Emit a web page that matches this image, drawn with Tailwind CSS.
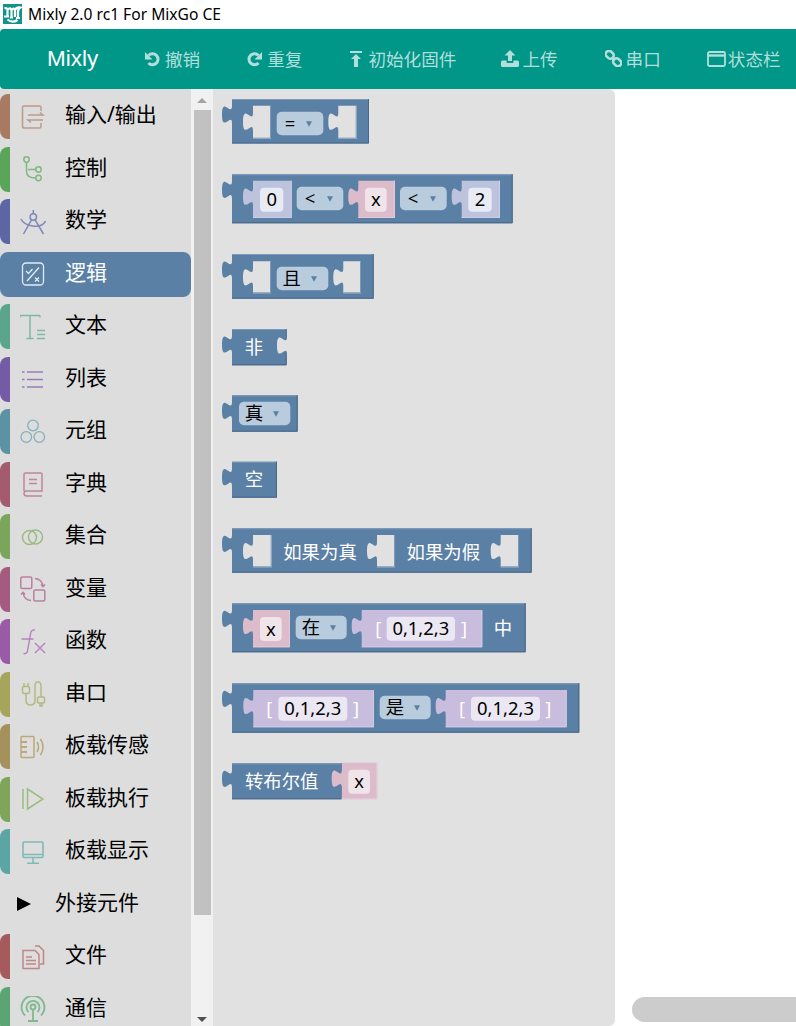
<!DOCTYPE html>
<html lang="en">
<head>
  <meta charset="UTF-8" />
  <title>Mixly 2.0 rc1 For MixGo CE</title>
  <script src="https://cdn.jsdelivr.net/npm/@tailwindcss/browser@4"></script>
</head>
<body class="h-[1026px] overflow-hidden bg-white text-black [font-family:'Noto_Sans','Noto_Sans_CJK_SC',sans-serif]">
  <!-- Window title -->
  <div class="h-[29px] flex items-center pl-[3px]">
    <svg class="w-[19px] h-[20px] mb-[1px]" viewBox="0 0 19 20">
      <rect width="19" height="20" fill="#12938a"/>
      <path d="M1.500 4.500c2-1 3 0 3 2v6.500M4.500 6c2-2.500 4-2 4 1v6M8.500 6c1.500-2 3.500-2 3.500 0.500V13M12 6c1-2 3-3 5.500-2.500-2.500 1-2.500 2.500-2.500 4.500v5.500M1 12.500h5M7 13.500h3M13 14h4M4.500 15.500c3 2.500 7 2.500 10 .5" fill="none" stroke="#fff" stroke-width="2.200"/>
    </svg>
    <span class="ml-[6px] text-[15.6px] leading-none">Mixly 2.0 rc1 For MixGo CE</span>
  </div>

  <!-- Nav bar -->
  <nav class="h-[60px] bg-[#009688] rounded-l-[4px] flex items-center pl-[47px] text-[17.6px] text-[#b2dfdb] whitespace-nowrap">
    <span class="text-[22.5px] text-white [font-family:'Liberation_Sans',sans-serif] w-[51px]">Mixly</span>
    <span class="ml-[47px] flex items-center gap-[5px]">
      <svg class="w-[15px] h-[16px]" viewBox="0 0 15 16" fill="none" stroke="#b2dfdb" stroke-width="3"><path d="M3.500 4.500a5.500 5.500 0 1 1 0 7.500"/><path d="M0 1v7.500h7.500z" fill="#b2dfdb" stroke="none"/></svg>
      <span>撤销</span>
    </span>
    <span class="ml-[47px] flex items-center gap-[5px]">
      <svg class="w-[15px] h-[16px]" viewBox="0 0 15 16" fill="none" stroke="#b2dfdb" stroke-width="3"><path d="M11.500 4.500a5.500 5.500 0 1 0 0 7.500"/><path d="M15 1v7.500H7.500z" fill="#b2dfdb" stroke="none"/></svg>
      <span>重复</span>
    </span>
    <span class="ml-[48px] flex items-center gap-[6px]">
      <svg class="w-[12px] h-[18px]" viewBox="0 0 12 18" fill="#b2dfdb"><path d="M0 1h12v2H0zM6 4l5 5H8v8H4V9H1z"/></svg>
      <span>初始化固件</span>
    </span>
    <span class="ml-[45px] flex items-center gap-[3px]">
      <svg class="w-[18px] h-[17px]" viewBox="0 0 18 17" fill="#b2dfdb"><path d="M9 0l5.500 5.500H11V11H7V5.500H3.500zM1.500 10.500h4v1.500q0 1 1 1h5q1 0 1-1v-1.500h4q1.500 0 1.500 1.500v3.500q0 1.500-1.500 1.500h-15Q0 17 0 15.500V12q0-1.500 1.500-1.500z"/></svg>
      <span>上传</span>
    </span>
    <span class="ml-[47px] flex items-center gap-[4px]">
      <svg class="w-[17px] h-[17px]" viewBox="0 0 17 17" fill="none" stroke="#b2dfdb" stroke-width="2.600"><rect x="0.500" y="1.500" width="8.500" height="6.500" rx="3.200" transform="rotate(40 4.700 4.700)"/><rect x="8" y="9" width="8.500" height="6.500" rx="3.200" transform="rotate(40 12.200 12.200)"/><path d="M7 7l3 3"/></svg>
      <span>串口</span>
    </span>
    <span class="ml-[46px] flex items-center gap-[2px]">
      <svg class="w-[19px] h-[16px]" viewBox="0 0 19 16" fill="none" stroke="#b2dfdb" stroke-width="1.800"><rect x="1" y="1" width="17" height="14" rx="1.500"/><path d="M1 4.500h17" stroke-width="2.400"/></svg>
      <span>状态栏</span>
    </span>
  </nav>

  <div class="flex h-[937px]">
    <!-- Toolbox -->
    <aside class="w-[191px] h-full overflow-hidden bg-[#dddddd] pt-[5px] text-[21px] leading-none whitespace-nowrap">
      <div class="flex items-center h-[45px] mb-[7.5px]">
        <span class="w-[10px] h-full rounded-l-lg bg-[#a87a62]"></span>
        <svg class="ml-[10px] w-[26px] h-[26px]" viewBox="0 0 26 26" fill="none" stroke="#bd9a88" stroke-width="1.500"><path d="M21 7V3.500q0-1.500-1.500-1.500H4Q2.500 2 2.500 3.500v19Q2.500 24 4 24h15.500q1.500 0 1.500-1.500V19"/><path d="M8 11h15l-3-2.500M23 16H8l3 2.500"/></svg>
        <span class="ml-[19px] pb-[4px]">输入/输出</span>
      </div>
      <div class="flex items-center h-[45px] mb-[7.5px]">
        <span class="w-[10px] h-full rounded-l-lg bg-[#5ba55b]"></span>
        <svg class="ml-[10px] w-[26px] h-[26px]" viewBox="0 0 26 26" fill="none" stroke="#7fb97f" stroke-width="1.500"><circle cx="6.500" cy="3.500" r="2.700"/><circle cx="18.500" cy="13.500" r="2.700"/><circle cx="18.500" cy="22" r="2.700"/><path d="M6.500 6.200v9c0 4 3 6.800 9.300 6.800M8 13.500h7.800"/></svg>
        <span class="ml-[19px] pb-[4px]">控制</span>
      </div>
      <div class="flex items-center h-[45px] mb-[7.5px]">
        <span class="w-[10px] h-full rounded-l-lg bg-[#5b67a5]"></span>
        <svg class="ml-[10px] w-[26px] h-[26px]" viewBox="0 0 26 26" fill="none" stroke="#7f88b9" stroke-width="1.500"><circle cx="13.300" cy="8" r="3.200"/><path d="M13.300 1v3.800M11.500 10.800L3.500 25M15.100 10.800L23.500 25M1 10c3 7 20 11 24.500 2"/></svg>
        <span class="ml-[19px] pb-[4px]">数学</span>
      </div>
      <div class="flex items-center h-[45px] mb-[7.5px] bg-[#5b80a5] rounded-lg text-white">
        <span class="w-[10px] h-full"></span>
        <svg class="ml-[11px] w-[24px] h-[26px]" viewBox="0 0 24 26" fill="none" stroke="#e3ebf2" stroke-width="1.300"><rect x="1.500" y="2" width="21" height="22" rx="3.500"/><path d="M18 6.500L6 20M5 10l2.500 2.500 4-4.500M14 16.500l4 4M18 16.500l-4 4"/></svg>
        <span class="ml-[20px] pb-[4px]">逻辑</span>
      </div>
      <div class="flex items-center h-[45px] mb-[7.5px]">
        <span class="w-[10px] h-full rounded-l-lg bg-[#5ba58c]"></span>
        <svg class="ml-[10px] w-[26px] h-[26px]" viewBox="0 0 26 26" fill="none" stroke="#7fb9a5" stroke-width="1.500"><path d="M0 1.500h20M0 1.500v2M20 1.500v2M10 1.500V24M6.500 24.500h7M17 16.500h8M17 20.500h8M17 24.500h8"/></svg>
        <span class="ml-[19px] pb-[4px]">文本</span>
      </div>
      <div class="flex items-center h-[45px] mb-[7.5px]">
        <span class="w-[10px] h-full rounded-l-lg bg-[#745ba5]"></span>
        <svg class="ml-[10px] w-[26px] h-[26px]" viewBox="0 0 26 26" fill="none" stroke="#957fb9" stroke-width="1.300"><path d="M2 6h2.500M7 6h16M2 13.500h2.500M7 13.500h16M2 21h2.500M7 21h16"/></svg>
        <span class="ml-[19px] pb-[4px]">列表</span>
      </div>
      <div class="flex items-center h-[45px] mb-[7.5px]">
        <span class="w-[10px] h-full rounded-l-lg bg-[#5b93a5]"></span>
        <svg class="ml-[10px] w-[26px] h-[26px]" viewBox="0 0 26 26" fill="none" stroke="#86b0bf" stroke-width="1.300"><circle cx="13" cy="6.500" r="5.300"/><circle cx="6.300" cy="18" r="5.300"/><circle cx="19.300" cy="18" r="5.300"/></svg>
        <span class="ml-[19px] pb-[4px]">元组</span>
      </div>
      <div class="flex items-center h-[45px] mb-[7.5px]">
        <span class="w-[10px] h-full rounded-l-lg bg-[#a55b6f]"></span>
        <svg class="ml-[10px] w-[26px] h-[26px]" viewBox="0 0 26 26" fill="none" stroke="#bf8696" stroke-width="1.500"><path d="M4 20V3.500Q4 2 5.500 2h15Q22 2 22 3.500V20H6.500q-2.500 0-2.500 2.500T6.500 25H22M9 8.500h8M9 12.500h8"/></svg>
        <span class="ml-[19px] pb-[4px]">字典</span>
      </div>
      <div class="flex items-center h-[45px] mb-[7.5px]">
        <span class="w-[10px] h-full rounded-l-lg bg-[#7ba55b]"></span>
        <svg class="ml-[10px] w-[26px] h-[26px]" viewBox="0 0 26 26" fill="none" stroke="#9bbb83" stroke-width="1.500"><circle cx="9.500" cy="13.500" r="7"/><circle cx="15.500" cy="13" r="7"/></svg>
        <span class="ml-[19px] pb-[4px]">集合</span>
      </div>
      <div class="flex items-center h-[45px] mb-[7.5px]">
        <span class="w-[10px] h-full rounded-l-lg bg-[#a55b80]"></span>
        <svg class="ml-[10px] w-[26px] h-[26px]" viewBox="0 0 26 26" fill="none" stroke="#bd7fa0" stroke-width="1.500"><rect x="0.800" y="1" width="11" height="11.500" rx="1.500"/><rect x="13.800" y="14" width="11" height="11" rx="1.500"/><path d="M15 2.500q7 .5 8 8M21 8.500l2 2.200 2-2.300M11 24.500q-7-.5-8-8M1 18.500l2-2.200 2 2.300"/></svg>
        <span class="ml-[19px] pb-[4px]">变量</span>
      </div>
      <div class="flex items-center h-[45px] mb-[7.5px]">
        <span class="w-[10px] h-full rounded-l-lg bg-[#995ba5]"></span>
        <svg class="ml-[10px] w-[26px] h-[26px]" viewBox="0 0 26 26" fill="none" stroke="#b382bd" stroke-width="1.400"><path d="M15 1c-3-.5-4 1-4.500 4L7.500 22c-.3 2-1.500 3-4 2.500M1.500 10h12M15 14l10 10M25 14L15 24"/></svg>
        <span class="ml-[19px] pb-[4px]">函数</span>
      </div>
      <div class="flex items-center h-[45px] mb-[7.5px]">
        <span class="w-[10px] h-full rounded-l-lg bg-[#a5a55b]"></span>
        <svg class="ml-[10px] w-[26px] h-[26px]" viewBox="0 0 26 26" fill="none" stroke="#b4ba7f" stroke-width="1.500"><rect x="2.500" y="5.500" width="7" height="7" rx="1.500"/><path d="M4 5.500V2M8 5.500V2M6 12.500V19q0 5 4.500 5t4.500-5V5q0-4 3-4t3 4v11"/><rect x="17.500" y="16" width="7" height="6" rx="1.500"/><path d="M20 22v3h2v-3"/></svg>
        <span class="ml-[19px] pb-[4px]">串口</span>
      </div>
      <div class="flex items-center h-[45px] mb-[7.5px]">
        <span class="w-[10px] h-full rounded-l-lg bg-[#a5915b]"></span>
        <svg class="ml-[10px] w-[26px] h-[26px]" viewBox="0 0 26 26" fill="none" stroke="#bba77a" stroke-width="1.500"><rect x="1" y="2.500" width="13" height="21" rx="1"/><path d="M1 8h6M1 13h6M1 18h6" stroke-width="2"/><path d="M17 8q3 5 0 10M20.500 5q5 8 0 16"/></svg>
        <span class="ml-[19px] pb-[4px]">板载传感</span>
      </div>
      <div class="flex items-center h-[45px] mb-[7.5px]">
        <span class="w-[10px] h-full rounded-l-lg bg-[#7fa55b]"></span>
        <svg class="ml-[10px] w-[26px] h-[26px]" viewBox="0 0 26 26" fill="none" stroke="#9cbd80" stroke-width="1.500"><path d="M3 3v20M7.500 3L23 13 7.500 23z"/></svg>
        <span class="ml-[19px] pb-[4px]">板载执行</span>
      </div>
      <div class="flex items-center h-[45px] mb-[7.5px]">
        <span class="w-[10px] h-full rounded-l-lg bg-[#5ba5a5]"></span>
        <svg class="ml-[10px] w-[26px] h-[26px]" viewBox="0 0 26 26" fill="none" stroke="#7fb9b9" stroke-width="1.600"><rect x="3" y="3" width="20" height="15.500" rx="1"/><path d="M3 15.500h20M13 18.500v5.500M7 24.300h12"/></svg>
        <span class="ml-[19px] pb-[4px]">板载显示</span>
      </div>
      <div class="flex items-center h-[45px] mb-[7.5px]">
        <span class="ml-[17px] w-0 h-0 border-y-[7.5px] border-y-transparent border-l-[14px] border-l-black"></span>
        <span class="ml-[24px] pb-[4px]">外接元件</span>
      </div>
      <div class="flex items-center h-[45px] mb-[7.5px]">
        <span class="w-[10px] h-full rounded-l-lg bg-[#a55b5b]"></span>
        <svg class="ml-[10px] w-[26px] h-[26px]" viewBox="0 0 26 26" fill="none" stroke="#bf8686" stroke-width="1.500"><path d="M15 2h4l4.500 4.500V20H20"/><path d="M3 6.500h12l4 4V24.500H3z" fill="#dddddd"/><path d="M6 13h6M6 16.500h10M6 20h10"/></svg>
        <span class="ml-[19px] pb-[4px]">文件</span>
      </div>
      <div class="flex items-center h-[45px]">
        <span class="w-[10px] h-full rounded-l-lg bg-[#5ba572]"></span>
        <svg class="ml-[10px] w-[26px] h-[26px]" viewBox="0 0 26 26" fill="none" stroke="#7fb98f" stroke-width="1.800"><circle cx="13" cy="11" r="2.500"/><path d="M13 13.500V25M8 25h10M8.500 16a6.500 6.500 0 1 1 9 0M5 19.500a11.500 11.500 0 1 1 16 0"/></svg>
        <span class="ml-[19px] pb-[4px]">通信</span>
      </div>
    </aside>

    <!-- Toolbox scrollbar -->
    <div class="w-[22px] h-full bg-[#f1f1f1] flex flex-col items-center relative">
      <span class="mt-[9px] w-0 h-0 border-x-[5px] border-x-transparent border-b-[5px] border-b-[#a3a3a3]"></span>
      <span class="mt-[7px] w-[17px] h-[805px] bg-[#c1c1c1]"></span>
      <span class="mt-[102px] w-0 h-0 border-x-[5px] border-x-transparent border-t-[5px] border-t-[#505050]"></span>
    </div>

    <!-- Flyout -->
    <div id="flyout" class="w-[402px] h-full bg-[#e1e1e1] rounded-r-[6px] overflow-hidden"></div>

    <!-- Workspace -->
    <main class="flex-1 relative">
      <span class="absolute left-[17px] top-[908px] right-0 h-[25px] bg-[#cccccc] rounded-l-full"></span>
    </main>
  </div>

  <script>
    // Blocks are drawn in page coordinates, the viewBox takes care of the offset
    const BLUE = '#5b80a5', LIGHT = '#7c99b7', DARK = '#496684', BG = '#e1e1e1';
    const PINK = ['#dcbccb', '#efe4ea', '#e3cad6'], NUM = ['#bdc2dd', '#e8eaf4', '#cbcfe5'], LIST = ['#c8bddc', '#ebe7f3', '#d4cbe4'];
    const TAB = 'c0,12 -10,-10 -10,9 s10,-3 10,9';
    let out = '';

    // block body with its output tab on the left
    function body(x, y, x2, y2) {
      out += `<path d="M${x} ${y}V${y + 6.5}${TAB}V${y2}H${x2}V${y}Z" fill="${BLUE}"/>`;
      out += `<path d="M${x} ${y + .5}H${x2}" stroke="${LIGHT}" fill="none"/>`;
      out += `<path d="M${x} ${y2 - .5}H${x2 - .5}V${y}" stroke="${DARK}" fill="none"/>`;
    }
    // input slot, empty or holding a child block
    function slot(x, y, x2, y2, fill = BG, edge = LIGHT) {
      out += `<path d="M${x} ${y}V${y + 7}${TAB}V${y2}H${x2}V${y}Z" fill="${fill}"/>`;
      out += `<path d="M${x} ${y2 - .5}H${x2 - .5}V${y}" stroke="${edge}" fill="none"/>`;
    }
    function label(cx, cy, s, fill = '#fff') {
      out += `<text x="${cx}" y="${cy + 6.5}" text-anchor="middle" font-size="18.400" fill="${fill}">${s}</text>`;
    }
    function field(x, y, x2, y2, fill, s) {
      out += `<rect x="${x}" y="${y}" width="${x2 - x}" height="${y2 - y}" rx="4" fill="${fill}"/>`;
      label((x + x2) / 2, (y + y2) / 2, s, '#000');
    }
    function dropdown(x, y, x2, tx, ax, s) {
      out += `<rect x="${x}" y="${y}" width="${x2 - x}" height="23.500" rx="5" fill="#b9ccdd"/>`;
      label(tx, y + 11.7, s, '#000');
      out += `<path d="M${ax - 3} ${y + 9.500}h6l-3 5.500z" fill="${BLUE}"/>`;
    }
    function child(x, y, x2, y2, c, fx, fx2, s) {
      slot(x, y, x2, y2, c[0], c[2]);
      field(fx, y + 7, fx2, y + 31, c[1], s);
    }
    function list(x, y, x2, y2, fx, fx2, b1, b2) {
      slot(x, y, x2, y2, LIST[0], LIST[2]);
      field(fx, y + 6.7, fx2, y + 30.7, LIST[1], '0,1,2,3');
      label(b1, y + 18, '[');
      label(b2, y + 18, ']');
    }

    body(232, 99, 369, 143.5);
    slot(253, 105.7, 271, 138.7);
    dropdown(276.7, 111.7, 323.3, 290, 309, '=');
    slot(338.3, 105.7, 356.7, 138.7);

    body(232, 174.3, 512.7, 223.3);
    child(253, 180.7, 291.7, 218, NUM, 260, 283.3, '0');
    dropdown(296.7, 186.7, 343.3, 310, 330, '&lt;');
    child(358.3, 180.7, 395, 218, PINK, 365, 386.7, 'x');
    dropdown(400, 186.7, 446.7, 413, 433, '&lt;');
    child(461.7, 180.7, 500, 218, NUM, 468.3, 491.7, '2');

    body(232, 254, 373.7, 298.7);
    slot(253, 261.3, 271, 293.3);
    dropdown(276.7, 266.7, 328.3, 291.7, 314, '且');
    slot(343.3, 261.3, 361, 293.3);

    body(232, 329, 286.7, 365.3);
    out += `<path d="M287 336.500${TAB}Z" fill="${BG}"/>`;
    label(254, 347, '非');

    body(232, 395.3, 297.7, 431.7);
    dropdown(239, 401.7, 290.3, 254, 276, '真');

    body(232, 461.7, 277, 497.7);
    label(254, 479.7, '空');

    body(232, 528.3, 531.7, 572.7);
    slot(253, 535, 271.7, 567.3);
    label(320, 552, '如果为真');
    slot(377, 535, 395, 567.3);
    label(443.3, 552, '如果为假');
    slot(500.7, 535, 519, 567.3);

    body(232, 603.3, 525.7, 652.3);
    child(253, 610, 290, 647.3, PINK, 260, 281.7, 'x');
    dropdown(295.7, 615.7, 346.7, 311, 333, '在');
    list(361.7, 610, 482.3, 647.3, 386.7, 455, 378.3, 464);
    label(503, 628, '中');

    body(232, 683.3, 579.3, 732.7);
    list(253.3, 690, 374, 727.3, 278.3, 347.3, 269.3, 356);
    dropdown(379.7, 695.7, 430.7, 395, 417, '是');
    list(445.7, 690, 566.7, 727.3, 471, 540, 462, 548.3);

    body(232, 763.3, 342, 799.3);
    label(281.7, 781, '转布尔值');
    child(341.7, 762.7, 377.3, 799.3, PINK, 348.3, 370, 'x');

    document.getElementById('flyout').innerHTML = `<svg width="402" height="937" viewBox="213 89 402 937">${out}</svg>`;
  </script>
</body>
</html>
